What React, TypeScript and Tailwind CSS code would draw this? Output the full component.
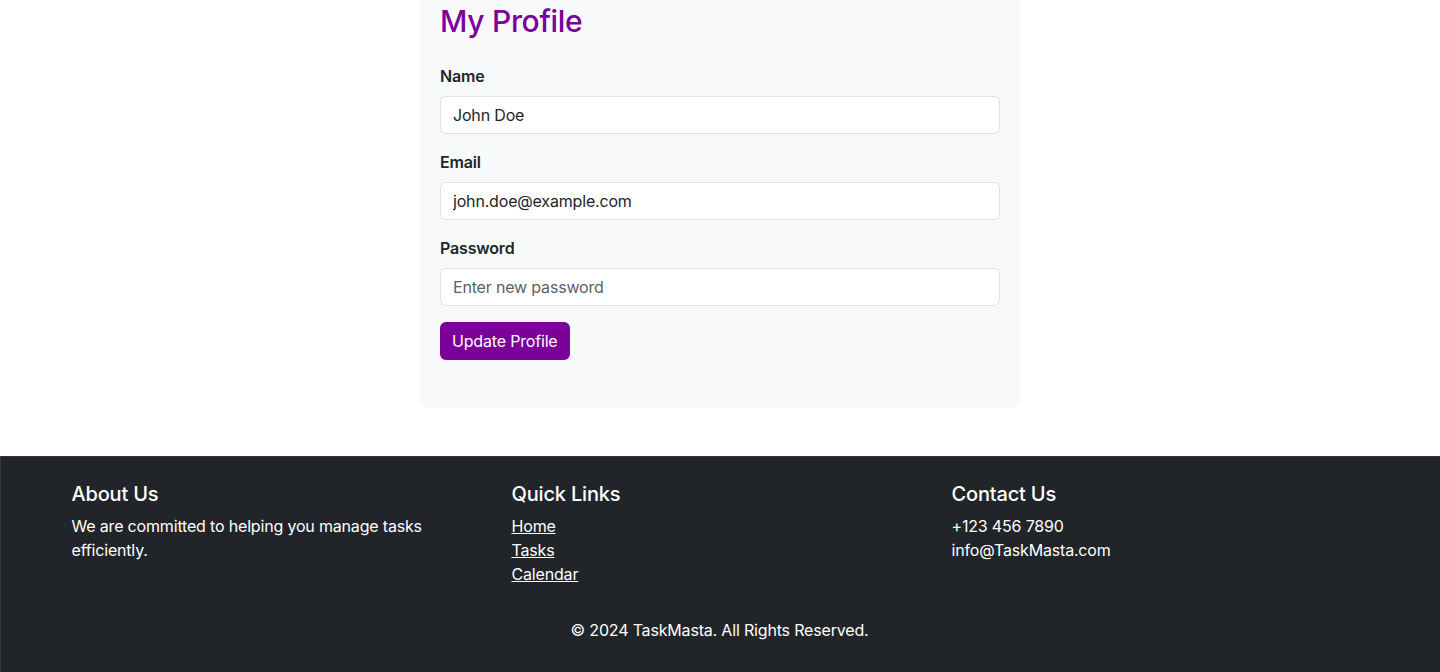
export default function App() {
  return (
    <div
      className="min-h-screen bg-white tracking-[-0.011em] text-[#212529]"
      style={{ fontFamily: "Inter, 'Liberation Sans', sans-serif" }}
    >
      <main className="flex justify-center">
        <div className="w-[600px] rounded-b-lg bg-[#f8f9fa] px-5 pt-[2px] pb-12">
          <h2 className="mb-[24px] text-[30px] leading-[38px] font-medium tracking-[-0.01em] text-[#7a0099]">
            My Profile
          </h2>
          <form onSubmit={(e) => e.preventDefault()}>
            <div className="mb-4">
              <label className="mb-2 block text-base leading-6 font-semibold">Name</label>
              <input
                type="text"
                defaultValue="John Doe"
                className="block h-[38px] w-full rounded-md border border-[#dee2e6] bg-white px-3 text-base text-[#212529] outline-none"
              />
            </div>
            <div className="mb-4">
              <label className="mb-2 block text-base leading-6 font-semibold">Email</label>
              <input
                type="email"
                defaultValue="john.doe@example.com"
                className="block h-[38px] w-full rounded-md border border-[#dee2e6] bg-white px-3 text-base text-[#212529] outline-none"
              />
            </div>
            <div className="mb-4">
              <label className="mb-2 block text-base leading-6 font-semibold">Password</label>
              <input
                type="password"
                placeholder="Enter new password"
                className="block h-[38px] w-full rounded-md border border-[#dee2e6] bg-white px-3 text-base text-[#212529] outline-none placeholder:text-[#5c6166]"
              />
            </div>
            <button
              type="submit"
              className="h-[38px] rounded-md bg-[#7a0099] px-3 text-base text-white"
            >
              Update Profile
            </button>
          </form>
        </div>
      </main>

      <footer className="mt-12 border-t border-l border-[#35383b] bg-[#212529] pt-[25px] pb-[30px] text-white">
        <div className="mx-auto w-[1320px] -translate-x-px">
          <div className="grid grid-cols-3">
            <div className="px-3">
              <h5 className="mb-2 text-[20px] leading-6 font-medium">About Us</h5>
              <p className="pr-6 text-base leading-6">
                We are committed to helping you manage tasks efficiently.
              </p>
            </div>
            <div className="px-3">
              <h5 className="mb-2 text-[20px] leading-6 font-medium">Quick Links</h5>
              <ul className="text-base leading-6">
                <li>
                  <a href="#" className="underline">Home</a>
                </li>
                <li>
                  <a href="#" className="underline">Tasks</a>
                </li>
                <li>
                  <a href="#" className="underline">Calendar</a>
                </li>
              </ul>
            </div>
            <div className="px-3">
              <h5 className="mb-2 text-[20px] leading-6 font-medium">Contact Us</h5>
              <p className="text-base leading-6">+123 456 7890</p>
              <p className="text-base leading-6">info@TaskMasta.com</p>
            </div>
          </div>
          <p className="mt-8 text-center text-base leading-6">
            © 2024 TaskMasta. All Rights Reserved.
          </p>
        </div>
      </footer>
    </div>
  );
}
